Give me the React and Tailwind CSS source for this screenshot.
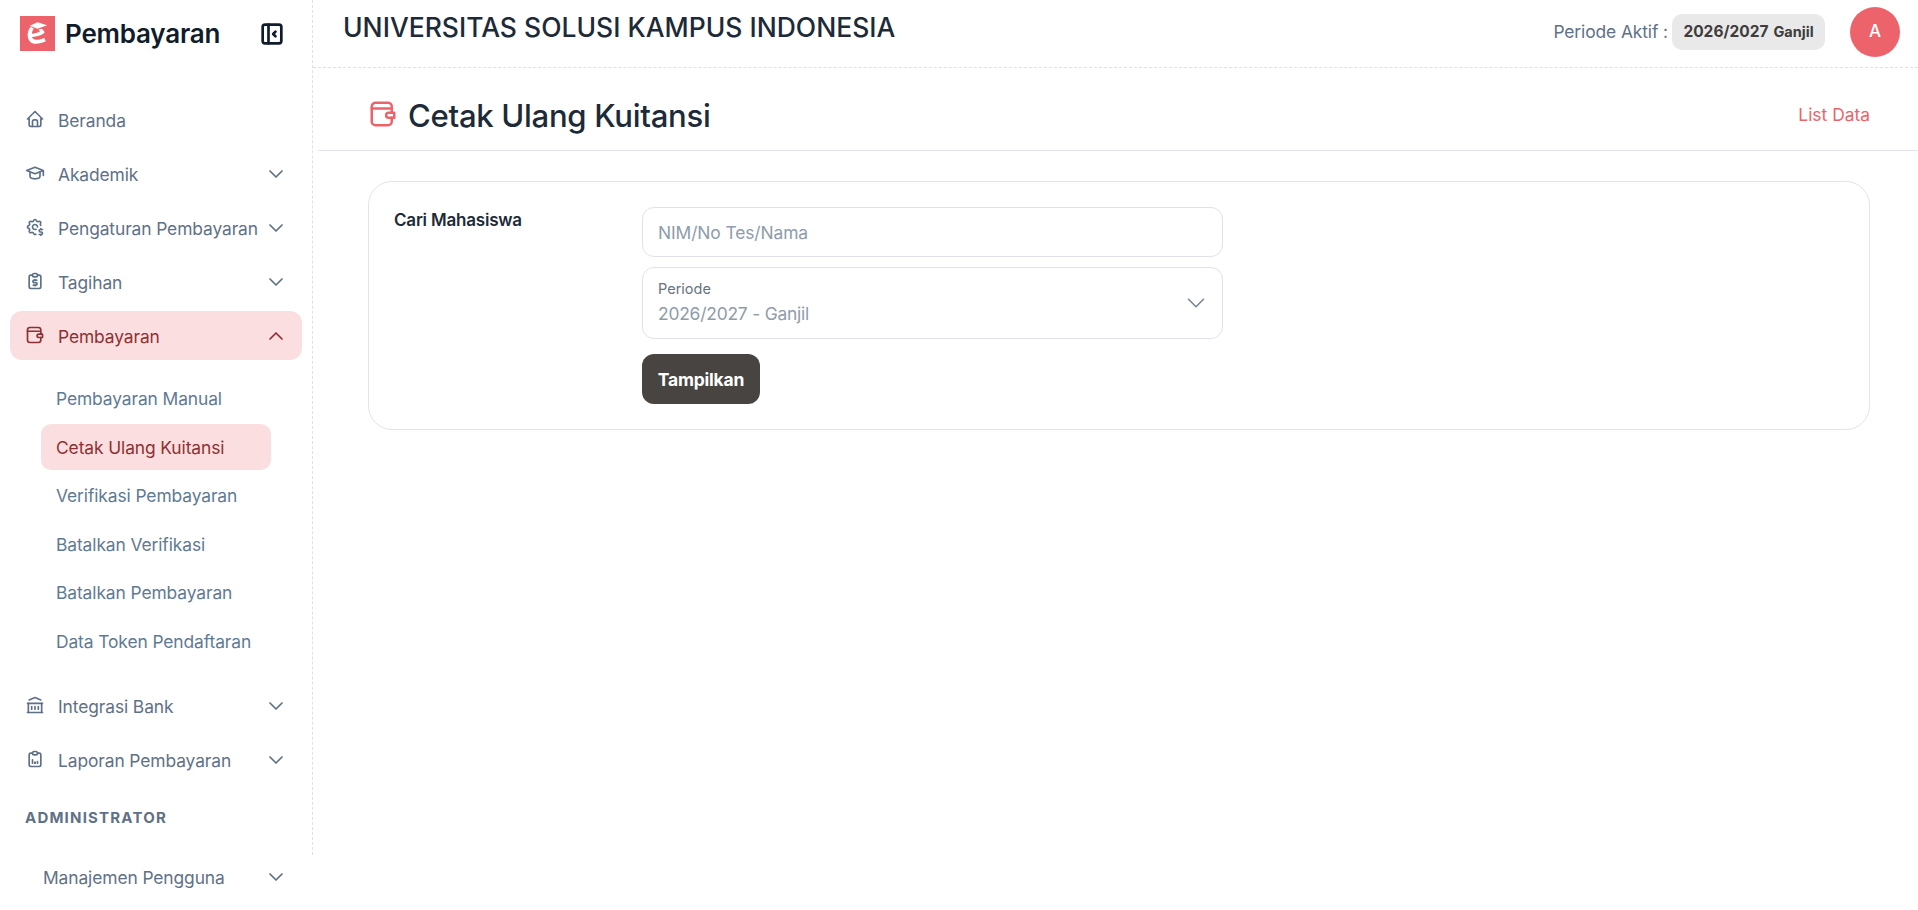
import React from "react";
import { TbHome, TbSchool, TbSettingsDollar, TbBuildingBank, TbClipboardData, TbChevronDown, TbChevronUp, TbLayoutSidebarLeftCollapse } from "react-icons/tb";

const ClipDollar = ({ className }) => (
  <svg viewBox="0 0 24 24" fill="none" stroke="currentColor" strokeWidth="2" strokeLinecap="round" strokeLinejoin="round" className={className}>
    <path d="M9 5H7a2 2 0 0 0-2 2v12a2 2 0 0 0 2 2h10a2 2 0 0 0 2-2V7a2 2 0 0 0-2-2h-2" />
    <rect x="9" y="3" width="6" height="4" rx="2" />
    <path d="M14 11h-3a1.25 1.25 0 0 0 0 3h2a1.25 1.25 0 0 1 0 3h-3" />
    <path d="M12 10v1M12 17v1" strokeWidth="1.500" />
  </svg>
);

const Wallet = ({ className }) => (
  <svg viewBox="0 0 24 24" fill="none" stroke="currentColor" strokeWidth="2" strokeLinecap="round" strokeLinejoin="round" className={className}>
    <path d="M19 11V6a3 3 0 0 0-3-3H6a3 3 0 0 0-3 3v12a3 3 0 0 0 3 3h10a3 3 0 0 0 3-3v-3" />
    <path d="M3 7.500h14.500" />
    <path d="M21 11h-4.500a2 2 0 0 0 0 4H21z" />
  </svg>
);

const Logo = () => (
  <svg viewBox="0 0 36 36" className="w-[35px] h-[35px] shrink-0">
    <rect width="36" height="36" fill="#ec636b" />
    <path d="M18 6.500l10 3-10 3.500-8-3z" fill="#fff" />
    <path d="M11 11c-2.500 3-3.500 7-3 10 .6 4.500 3.500 7.500 8 7.500 4 0 7.500-1 10.500-2.500l-1.500-3.500c-3 1.300-6 2-8.500 2-2 0-3.500-1-4.200-2.800 5-.5 10-2 13-4.500-.5-2-2-3.500-3.500-4l-3 1c1 .4 1.700 1 2 1.600-2.500 1.500-5.500 2.300-8.700 2.500.2-2 1-4 2-5.500z" fill="#fff" />
  </svg>
);

const Item = ({ icon: Icon, label, chevron = true, active = false }) => (
  <div className={`mx-[10px] h-[49px] pl-[15px] pr-[14px] flex items-center rounded-[12px] mb-[5px] ${active ? "bg-[#fbdfe0] text-[#8f2f33]" : "text-[#5f7187]"}`}>
    <Icon className="w-[20px] h-[20px] shrink-0 -mt-[1px]" />
    <span className="ml-[13px] flex-1 pt-[3px] text-[17.4px] whitespace-nowrap tracking-[-0.1px]">{label}</span>
    {chevron && (active
      ? <TbChevronUp strokeWidth={1.700} className="w-[24px] h-[24px] shrink-0" />
      : <TbChevronDown strokeWidth={1.700} className="w-[24px] h-[24px] shrink-0" />)}
  </div>
);

const Sub = ({ label, active = false }) => (
  <div className={`ml-[41px] w-[230px] h-[46px] mb-[2.500px] px-[15px] pt-[3px] flex items-center rounded-[10px] text-[17.4px] tracking-[-0.1px] whitespace-nowrap ${active ? "bg-[#fbdfe0] text-[#8f2f33]" : "text-[#5f7a93]"}`}>
    {label}
  </div>
);

export default function App() {
  return (
    <div className="h-screen w-full overflow-hidden bg-white flex font-['Inter','Noto_Sans',sans-serif]" >
      <aside className="w-[313px] h-[855px] shrink-0 border-r border-dashed border-[#dfe1e6]">
        <div className="h-[67px] pl-[20px] pr-[26px] flex items-center">
          <Logo />
          <span className="ml-[10px] flex-1 text-[26px] font-semibold text-[#111c2b] tracking-[-0.2px]">Pembayaran</span>
          <TbLayoutSidebarLeftCollapse strokeWidth={2.300} className="w-[28px] h-[28px] text-[#111c2b]" />
        </div>
        <nav className="pt-[28px]">
          <Item icon={TbHome} label="Beranda" chevron={false} />
          <Item icon={TbSchool} label="Akademik" />
          <Item icon={TbSettingsDollar} label="Pengaturan Pembayaran" />
          <Item icon={ClipDollar} label="Tagihan" />
          <Item icon={Wallet} label="Pembayaran" active />
          <div className="pt-[10px] pb-[15px]">
            <Sub label="Pembayaran Manual" />
            <Sub label="Cetak Ulang Kuitansi" active />
            <Sub label="Verifikasi Pembayaran" />
            <Sub label="Batalkan Verifikasi" />
            <Sub label="Batalkan Pembayaran" />
            <Sub label="Data Token Pendaftaran" />
          </div>
          <Item icon={TbBuildingBank} label="Integrasi Bank" />
          <Item icon={TbClipboardData} label="Laporan Pembayaran" />
          <div className="pl-[25px] pt-[17px] h-[63px] text-[15px] font-bold tracking-[1.200px] text-[#5f7187] leading-[24px]">ADMINISTRATOR</div>
          <div className="mx-[10px] h-[49px] pl-[33px] pr-[14px] flex items-center text-[#5f7187]">
            <span className="flex-1 pt-[3px] text-[17.4px] tracking-[-0.1px] whitespace-nowrap">Manajemen Pengguna</span>
            <TbChevronDown strokeWidth={1.700} className="w-[24px] h-[24px] shrink-0" />
          </div>
        </nav>
      </aside>
      <main className="flex-1 min-w-0">
        <header className="h-[68px] pl-[30px] pr-[18px] pb-[3px] flex items-center border-b border-dashed border-[#dfe1e6]">
          <h1 className="flex-1 text-[26.500px] font-medium text-[#1d2a38] -mt-[8px] whitespace-nowrap">UNIVERSITAS SOLUSI KAMPUS INDONESIA</h1>
          <span className="text-[17.4px] text-[#5f7187] tracking-[-0.1px] mr-[4px]">Periode Aktif :</span>
          <span className="h-[36px] w-[153px] flex items-center justify-center gap-[5px] rounded-[10px] bg-[#e9e9e9] text-[#3e3c3c] font-bold whitespace-nowrap">
            <span className="text-[15.5px]">2026/2027</span>
            <span className="text-[14.5px]">Ganjil</span>
          </span>
          <span className="ml-[25px] w-[50px] h-[50px] rounded-full bg-[#ec636b] text-white flex items-center justify-center text-[17px] font-medium">A</span>
        </header>
        <div className="ml-[5px] h-[83px] pl-[50px] pr-[48px] pt-[14px] flex items-center border-b border-[#e3e3ea]">
          <Wallet className="w-[30px] h-[30px] text-[#ec636b] -mt-[4px]" />
          <h2 className="ml-[10px] flex-1 text-[31.1px] font-medium text-[#1d2a38] tracking-[-0.3px]">Cetak Ulang Kuitansi</h2>
          <a className="text-[17.4px] text-[#ec636b] -mt-[2px]">List Data</a>
        </div>
        <div className="mt-[30px] ml-[55px] mr-[48px] h-[249px] rounded-[24px] border border-[#e3e3ea] pl-[25px] pr-[24px] pt-[25px] flex">
          <div className="w-[248px] text-[17px] font-semibold text-[#1d2a38] leading-[26px] tracking-[-0.2px]">Cari Mahasiswa</div>
          <div className="w-[581px]">
            <div className="h-[50px] rounded-[12px] border border-[#e0e2ea] px-[15px] pt-[3px] flex items-center text-[17.4px] text-[#8e9cab] tracking-[-0.1px]">NIM/No Tes/Nama</div>
            <div className="mt-[10px] h-[72px] rounded-[12px] border border-[#e0e2ea] pl-[15px] pr-[11px] flex items-center">
              <div className="flex-1 -mt-[2px]">
                <div className="text-[14.5px] text-[#66727f] leading-[20px]">Periode</div>
                <div className="mt-[3px] text-[17.4px] text-[#8e9cab] leading-[24px] tracking-[-0.2px]">2026/2027 - Ganjil</div>
              </div>
              <TbChevronDown strokeWidth={1.200} className="w-[30px] h-[30px] text-[#75838f]" />
            </div>
            <button className="mt-[15px] block h-[50px] w-[118px] rounded-[12px] pt-[2px] bg-[#484442] text-white text-[17.500px] font-bold tracking-[-0.2px]">Tampilkan</button>
          </div>
        </div>
      </main>
    </div>
  );
}
